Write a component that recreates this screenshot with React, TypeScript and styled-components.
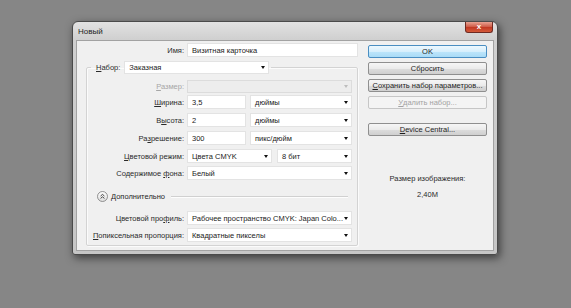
import styled, { createGlobalStyle } from 'styled-components';

const GlobalStyle = createGlobalStyle`
  html, body {
    margin: 0;
    padding: 0;
  }
  body {
    background: #868686;
    font-family: 'Liberation Sans', Arial, sans-serif;
    font-size: 7.5px;
    color: #262626;
  }
`;

const Desktop = styled.div`
  width: 571px;
  height: 308px;
  box-sizing: border-box;
  padding: 21px 0 0 72px;
  background: #868686;
`;

const Window = styled.div`
  width: 426px;
  box-sizing: border-box;
  border: 1px solid #4a4a4a;
  border-radius: 6px 6px 3px 3px;
  padding: 0 3px 3px;
  background: linear-gradient(to bottom, #e2e2e2 0px, #d0d0d0 17px, #c6c6c6 100%);
  box-shadow: 2px 3px 8px rgba(0, 0, 0, 0.55);
`;

const TitleBar = styled.div`
  height: 18px;
  display: flex;
  justify-content: space-between;
  align-items: flex-start;
`;

const Title = styled.span`
  padding: 5px 0 0 2px;
  font-size: 8px;
  color: #1e1e1e;
`;

const CloseButton = styled.div`
  width: 28px;
  height: 11px;
  margin-right: 1px;
  border: 1px solid #6e2a22;
  border-top: none;
  border-radius: 0 0 3px 3px;
  box-sizing: border-box;
  background: linear-gradient(to bottom, #e8a393 0%, #d0604c 45%, #c23a24 55%, #d45a3a 100%);
  color: #fff;
  font-size: 8px;
  font-weight: bold;
  display: flex;
  align-items: center;
  justify-content: center;
  line-height: 1;
`;

const Content = styled.div`
  height: 211px;
  box-sizing: border-box;
  border: 1px solid #a2a2a2;
  background: #f0f0f0;
  display: flex;
  gap: 10px;
  padding: 1px 6px 0 9px;
`;

const LeftPane = styled.div`
  width: 272px;
  display: flex;
  flex-direction: column;
`;

const NameRow = styled.div`
  display: grid;
  grid-template-columns: 98px 171px;
  column-gap: 3px;
  height: 14px;
  margin-top: 1px;
`;

const Row = styled.div<{ $mt: number; $h?: number }>`
  display: grid;
  grid-template-columns: 97px 165px;
  column-gap: 3px;
  height: ${(p) => p.$h ?? 14}px;
  margin-top: ${(p) => p.$mt}px;
`;

const Label = styled.label<{ $disabled?: boolean }>`
  text-align: right;
  white-space: nowrap;
  align-self: center;
  color: ${(p) => (p.$disabled ? '#a6a6a6' : '#2a2a2a')};
`;

const U = styled.span`
  text-decoration: underline;
`;

const Group = styled.fieldset`
  width: 272px;
  box-sizing: border-box;
  min-width: 0;
  margin: 4px 0 0;
  padding: 0 3px 3px 0;
  border: 1px solid #d3d3d3;
  border-radius: 2px;
  box-shadow: inset 1px 1px 0 #fbfbfb, 1px 1px 0 #fbfbfb;
`;

const Legend = styled.legend`
  margin-left: 4px;
  padding: 0 2px 0 5px;
  height: 13px;
  display: flex;
  align-items: center;
  gap: 4px;
`;

const Cell = styled.div<{ $gap?: number }>`
  display: flex;
  gap: ${(p) => p.$gap ?? 4}px;
  min-width: 0;
`;

const Field = styled.div<{ $w?: number; $disabled?: boolean }>`
  width: ${(p) => (p.$w ? `${p.$w}px` : '100%')};
  height: 100%;
  box-sizing: border-box;
  flex-shrink: 0;
  display: flex;
  align-items: center;
  padding: 0 3px 0 4px;
  background: ${(p) => (p.$disabled ? '#ededed' : '#ffffff')};
  border: 1px solid ${(p) => (p.$disabled ? '#dcdcdc' : '#e3e3e3')};
  white-space: nowrap;
  overflow: hidden;
  color: #222;
`;

const FieldText = styled.span`
  flex: 1;
  min-width: 0;
  white-space: pre;
`;

const Arrow = styled.span<{ $disabled?: boolean }>`
  width: 0;
  height: 0;
  flex-shrink: 0;
  margin-left: 2px;
  border-left: 2.5px solid transparent;
  border-right: 2.5px solid transparent;
  border-top: 3px solid ${(p) => (p.$disabled ? '#bdbdbd' : '#111')};
`;

const AdvancedRow = styled.div`
  margin-top: 10px;
  height: 12px;
  padding: 0 6px 0 10px;
  display: flex;
  align-items: center;
  gap: 3px;
`;

const AdvancedLine = styled.div`
  flex: 1;
  height: 1px;
  margin-left: 3px;
  background: #d0d0d0;
  box-shadow: 0 1px 0 #fdfdfd;
`;

const RightPane = styled.div`
  width: 119px;
  padding-top: 3px;
  display: flex;
  flex-direction: column;
  align-items: stretch;
`;

const Button = styled.div<{ $variant?: 'default' | 'disabled'; $mt?: number }>`
  height: 13px;
  box-sizing: border-box;
  margin-top: ${(p) => p.$mt ?? 0}px;
  border-radius: 2px;
  display: flex;
  align-items: center;
  justify-content: center;
  white-space: nowrap;
  border: 1px solid
    ${(p) =>
      p.$variant === 'default' ? '#4a8ec2' : p.$variant === 'disabled' ? '#c6c6c6' : '#8f8f8f'};
  background: ${(p) =>
    p.$variant === 'default'
      ? 'linear-gradient(to bottom, #edf8fe 0%, #d7effc 50%, #bde5fb 51%, #a9dbf6 100%)'
      : p.$variant === 'disabled'
        ? '#f4f4f4'
        : 'linear-gradient(to bottom, #f6f6f6 0%, #ebebeb 50%, #dddddd 51%, #cfcfcf 100%)'};
  color: ${(p) => (p.$variant === 'disabled' ? '#a3a3a3' : '#1e1e1e')};
`;

const SizeInfo = styled.div`
  margin-top: 38px;
  display: flex;
  flex-direction: column;
  align-items: center;
  gap: 6px;
  line-height: 10px;
  color: #2a2a2a;
`;

const MoreIcon = () => (
  <svg width="11" height="11" viewBox="0 0 11 11">
    <defs>
      <linearGradient id="mi" x1="0" y1="0" x2="0" y2="1">
        <stop offset="0" stopColor="#ffffff" />
        <stop offset="1" stopColor="#dcdcdc" />
      </linearGradient>
    </defs>
    <circle cx="5.5" cy="5.5" r="5" fill="url(#mi)" stroke="#7a7a7a" strokeWidth="0.8" />
    <path d="M3.6 5 L5.5 3.4 L7.4 5 M3.6 7.4 L5.5 5.8 L7.4 7.4" fill="none" stroke="#333" strokeWidth="0.9" />
  </svg>
);

const Select = ({ value, w, disabled }: { value: string; w?: number; disabled?: boolean }) => (
  <Field $w={w} $disabled={disabled}>
    <FieldText>{value}</FieldText>
    <Arrow $disabled={disabled} />
  </Field>
);

const App = () => {
  return (
    <>
      <GlobalStyle />
      <Desktop>
        <Window>
          <TitleBar>
            <Title>Новый</Title>
            <CloseButton>x</CloseButton>
          </TitleBar>
          <Content>
            <LeftPane>
              <NameRow>
                <Label>Имя:</Label>
                <Field>
                  <FieldText>Визитная карточка</FieldText>
                </Field>
              </NameRow>
              <Group>
                <Legend>
                  <Label>
                    <U>Н</U>абор:
                  </Label>
                  <Select value="Заказная" w={145} />
                </Legend>
                <Row $mt={6} $h={13}>
                  <Label $disabled>
                    <U>Р</U>азмер:
                  </Label>
                  <Select value="" disabled />
                </Row>
                <Row $mt={2}>
                  <Label>
                    <U>Ш</U>ирина:
                  </Label>
                  <Cell>
                    <Field $w={59}>3,5</Field>
                    <Select value="дюймы" w={102} />
                  </Cell>
                </Row>
                <Row $mt={4}>
                  <Label>
                    В<U>ы</U>сота:
                  </Label>
                  <Cell>
                    <Field $w={59}>2</Field>
                    <Select value="дюймы" w={102} />
                  </Cell>
                </Row>
                <Row $mt={4}>
                  <Label>
                    Ра<U>з</U>решение:
                  </Label>
                  <Cell>
                    <Field $w={59}>300</Field>
                    <Select value="пикс/дюйм" w={102} />
                  </Cell>
                </Row>
                <Row $mt={4}>
                  <Label>
                    <U>Ц</U>ветовой режим:
                  </Label>
                  <Cell $gap={5}>
                    <Select value="Цвета CMYK" w={85} />
                    <Select value="8 бит" w={75} />
                  </Cell>
                </Row>
                <Row $mt={3}>
                  <Label>
                    Содержимое <U>ф</U>она:
                  </Label>
                  <Select value="Белый" />
                </Row>
                <AdvancedRow>
                  <MoreIcon />
                  <span>Дополнительно</span>
                  <AdvancedLine />
                </AdvancedRow>
                <Row $mt={9}>
                  <Label>
                    Цветовой про<U>ф</U>иль:
                  </Label>
                  <Select value="Рабочее пространство CMYK: Japan Colo..." />
                </Row>
                <Row $mt={3}>
                  <Label>
                    <U>П</U>опиксельная пропорция:
                  </Label>
                  <Select value="Квадратные пикселы" />
                </Row>
              </Group>
            </LeftPane>
            <RightPane>
              <Button $variant="default">OK</Button>
              <Button $mt={4}>Сбросить</Button>
              <Button $mt={4}>
                <U>С</U>охранить набор параметров...
              </Button>
              <Button $mt={4} $variant="disabled">
                <U>У</U>далить набор...
              </Button>
              <Button $mt={14}>
                <U>D</U>evice Central...
              </Button>
              <SizeInfo>
                <span>Размер изображения:</span>
                <span>2,40M</span>
              </SizeInfo>
            </RightPane>
          </Content>
        </Window>
      </Desktop>
    </>
  );
};

export default App;
